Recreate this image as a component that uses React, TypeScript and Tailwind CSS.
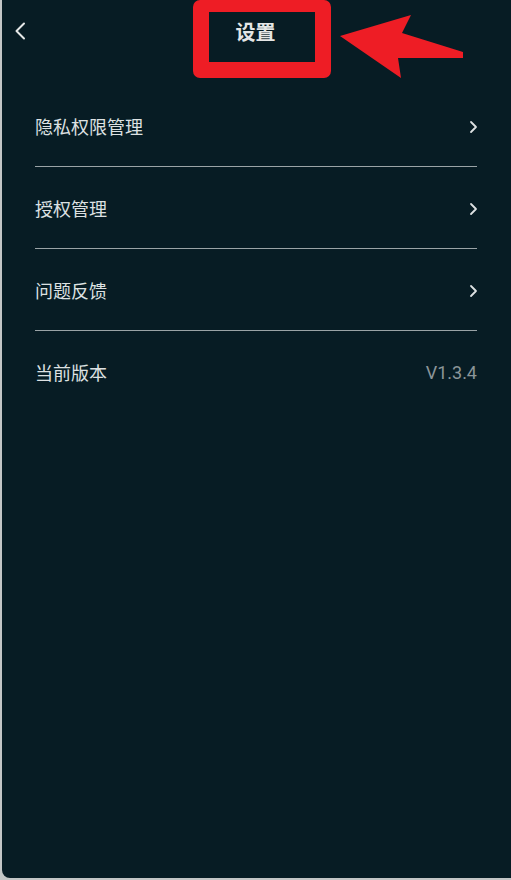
const rows = [
  { label: '隐私权限管理', arrow: true },
  { label: '授权管理', arrow: true },
  { label: '问题反馈', arrow: true },
  { label: '当前版本', value: 'V1.3.4' },
];

const cjk = { fontFamily: '"Noto Sans CJK SC", "Noto Sans", sans-serif' };

const App = () => {
  return (
    <div className="w-[511px] h-[880px] bg-[#c3c6c6] pl-[2px] pb-[2px]">
      <div className="relative h-full bg-[#071c24] rounded-bl-[8px] overflow-hidden" style={cjk}>
        {/* Header */}
        <div className="relative h-[62px] flex items-center justify-center">
          <svg className="absolute left-[12px] top-[22px]" width="12" height="18" viewBox="0 0 12 18" fill="none">
            <polyline points="10,1.5 2.5,9 10,16.5" stroke="#e6e8e8" strokeWidth="2" strokeLinecap="round" strokeLinejoin="round" />
          </svg>
          <h1 className="text-[20px] font-bold text-[#e4e6e6] ml-[-2px] mt-[1px]">设置</h1>
        </div>

        {/* Annotation overlays */}
        <div className="absolute left-[191px] top-0 w-[138px] h-[78px] border-[16px] border-t-[12px] border-[#ee1d25] rounded-[7px]" />
        <svg className="absolute left-[334px] top-[12px]" width="132" height="70" viewBox="0 0 132 70">
          <polygon points="4,24 75,3 66,21 127,40 127,46 62,46 65,66" fill="#ee1d25" />
        </svg>

        {/* List */}
        <div className="mt-[23px] pl-[33px] pr-[34px]">
          {rows.map((row, i) => (
            <div
              key={row.label}
              className={
                i < rows.length - 1
                  ? 'h-[82px] flex items-center justify-between border-b border-[#9aa3a6] pt-[2px]'
                  : 'h-[82px] flex items-center justify-between pt-[1px]'
              }
            >
              <span className="text-[18px] text-[#dde1e2]">{row.label}</span>
              {row.arrow && (
                <svg width="9" height="14" viewBox="0 0 9 14" fill="none" className="mr-[-1px]">
                  <polyline points="2,2 7,7 2,12" stroke="#dde1e2" strokeWidth="1.8" strokeLinecap="round" strokeLinejoin="round" />
                </svg>
              )}
              {row.value && (
                <span className="text-[18px] text-[#8b9598]" style={{ fontFamily: 'Roboto, "Liberation Sans", sans-serif' }}>
                  {row.value}
                </span>
              )}
            </div>
          ))}
        </div>
      </div>
    </div>
  );
};

export default App;
